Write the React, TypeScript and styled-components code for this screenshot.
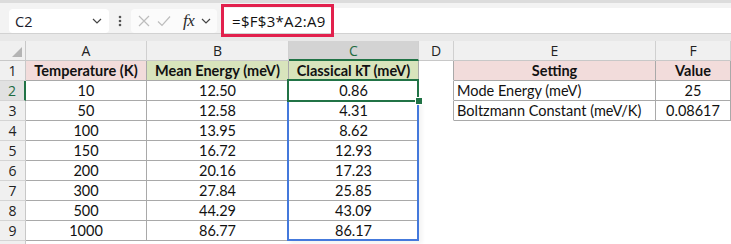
import React from 'react'
import styled, { createGlobalStyle } from 'styled-components'

const GlobalStyle = createGlobalStyle`
  html, body {
    margin: 0;
    padding: 0;
    background: #ffffff;
  }
  body {
    font-family: Lato, 'Liberation Sans', sans-serif;
  }
`

const Page = styled.div`
  width: 731px;
  height: 244px;
  overflow: hidden;
  display: flex;
  flex-direction: column;
  background: #ffffff;
`

const TopStrip = styled.div`
  flex-shrink: 0;
  height: 3px;
  background: #dcdcdc;
`

const BarRow = styled.div`
  flex-shrink: 0;
  height: 30px;
  display: flex;
  align-items: flex-end;
  background: #f3f3f3;
  border-bottom: 1px solid #d2d2d2;
`

const Band = styled.div`
  flex-shrink: 0;
  height: 7px;
  background: #e8e8e8;
`

const NameBox = styled.div`
  width: 100px;
  height: 24px;
  margin-left: 9px;
  box-sizing: border-box;
  background: #ffffff;
  border-radius: 4px;
  display: flex;
  align-items: center;
  justify-content: space-between;
  padding: 0 7px 0 6px;
  font-family: 'Open Sans', sans-serif;
  font-size: 14.5px;
  color: #1c1c2c;
`

const Dots = styled.div`
  width: 22px;
  height: 24px;
  display: flex;
  align-items: center;
  justify-content: center;
`

const FuncBox = styled.div`
  width: 86px;
  height: 24px;
  box-sizing: border-box;
  background: #fbfbfb;
  border-radius: 4px;
  display: flex;
  align-items: center;
  padding-left: 7px;
  gap: 7px;
`

const Fx = styled.span`
  font-family: 'Liberation Serif', serif;
  font-style: italic;
  font-size: 17px;
  color: #2a2a2a;
  margin-left: 5px;
  letter-spacing: -0.5px;
`

const FormulaBar = styled.div`
  position: relative;
  flex: 1;
  height: 25px;
  margin-left: 4px;
  background: #ffffff;
  display: flex;
  align-items: center;
  padding-left: 11px;
  font-family: 'Open Sans', sans-serif;
  font-size: 15px;
  color: #111111;
  letter-spacing: 0.3px;
`

const Highlight = styled.div`
  position: absolute;
  left: 0;
  top: -4px;
  width: 113px;
  height: 33px;
  box-sizing: border-box;
  border: 3px solid #e2214d;
  z-index: 2;
`

const SheetWrap = styled.div`
  position: relative;
  flex: 1;
  min-height: 0;
`

const Sheet = styled.div`
  display: grid;
  grid-template-columns: 26px 121px 142px 130px 35px 202px 75px;
  grid-auto-rows: 20px;
`

const ColHead = styled.div<{ $active?: boolean }>`
  box-sizing: border-box;
  display: flex;
  align-items: center;
  justify-content: center;
  background: ${(p) => (p.$active ? '#d3d3d3' : '#f0f0f0')};
  color: ${(p) => (p.$active ? '#1e6b41' : '#222222')};
  border-right: 1px solid #d0d0d0;
  border-bottom: ${(p) => (p.$active ? '2px solid #217346' : '1px solid #c8c8c8')};
  font-family: 'Open Sans', sans-serif;
  font-size: 14px;
`

const Corner = styled.div`
  box-sizing: border-box;
  background: #f0f0f0;
  border-right: 1px solid #c8c8c8;
  border-bottom: 1px solid #c8c8c8;
  display: flex;
  align-items: flex-end;
  justify-content: flex-end;
  padding: 0 3px 3px 0;
`

const RowHead = styled.div<{ $active?: boolean }>`
  box-sizing: border-box;
  display: flex;
  align-items: center;
  justify-content: center;
  background: ${(p) => (p.$active ? '#e1e1e1' : '#f0f0f0')};
  color: ${(p) => (p.$active ? '#1e6b41' : '#222222')};
  border-right: ${(p) => (p.$active ? '2px solid #217346' : '1px solid #c8c8c8')};
  border-bottom: 1px solid #d4d4d4;
  font-family: 'Open Sans', sans-serif;
  font-size: 14px;
`

const Cell = styled.div<{
  $fill?: string
  $bold?: boolean
  $left?: boolean
  $right?: boolean
  $bottom?: boolean
}>`
  box-sizing: border-box;
  display: flex;
  align-items: center;
  justify-content: ${(p) => (p.$left ? 'flex-start' : 'center')};
  padding-left: ${(p) => (p.$left ? '3px' : '0')};
  background: ${(p) => p.$fill || '#ffffff'};
  border-right: 1px solid ${(p) => (p.$right ? '#a9a9a9' : 'transparent')};
  border-bottom: 1px solid ${(p) => (p.$bottom ? '#a9a9a9' : 'transparent')};
  font-size: 14.5px;
  font-weight: ${(p) => (p.$bold ? 700 : 400)};
  color: #111111;
  white-space: nowrap;
`

const RangeBox = styled.div`
  position: absolute;
  left: 287px;
  top: 59px;
  width: 132px;
  height: 141px;
  box-sizing: border-box;
  border: 2px solid #4479dc;
  box-shadow: 3px 3px 4px rgba(0, 0, 0, 0.05);
  pointer-events: none;
`

const ActiveCell = styled.div`
  position: absolute;
  left: 287px;
  top: 38px;
  width: 132px;
  height: 23px;
  box-sizing: border-box;
  border: 2px solid #217346;
  pointer-events: none;
`

const FillHandle = styled.div`
  position: absolute;
  left: 415px;
  top: 56px;
  width: 6px;
  height: 6px;
  background: #217346;
  border: 1px solid #ffffff;
`

const PINK = '#f2dcdb'
const GREEN = '#d8e4bc'

const columns = ['A', 'B', 'C', 'D', 'E', 'F']

const temps = ['10', '50', '100', '150', '200', '300', '500', '1000']
const meanEnergy = ['12.50', '12.58', '13.95', '16.72', '20.16', '27.84', '44.29', '86.77']
const classical = ['0.86', '4.31', '8.62', '12.93', '17.23', '25.85', '43.09', '86.17']

const settings: Record<number, [string, string]> = {
  2: ['Mode Energy (meV)', '25'],
  3: ['Boltzmann Constant (meV/K)', '0.08617'],
}

const Chevron = () => (
  <svg width='10' height='6' viewBox='0 0 10 6'>
    <path d='M1 1l4 4 4-4' fill='none' stroke='#444' strokeWidth='1.2' />
  </svg>
)

const App: React.FC = () => {
  const rows = []
  for (let i = 0; i < 8; i++) {
    const r = i + 2
    const setting = settings[r]
    rows.push(
      <React.Fragment key={r}>
        <RowHead $active={r === 2}>{r}</RowHead>
        <Cell $right $bottom>{temps[i]}</Cell>
        <Cell $right $bottom>{meanEnergy[i]}</Cell>
        <Cell $right $bottom>{classical[i]}</Cell>
        <Cell $right={!!setting} />
        {setting ? (
          <>
            <Cell $left $right $bottom>{setting[0]}</Cell>
            <Cell $right $bottom>{setting[1]}</Cell>
          </>
        ) : (
          <>
            <Cell />
            <Cell />
          </>
        )}
      </React.Fragment>
    )
  }

  return (
    <Page>
      <GlobalStyle />
      <TopStrip />
      <BarRow>
        <NameBox>
          <span>C2</span>
          <Chevron />
        </NameBox>
        <Dots>
          <svg width='4' height='12' viewBox='0 0 4 12'>
            <circle cx='2' cy='2' r='1.3' fill='#555' />
            <circle cx='2' cy='6' r='1.3' fill='#555' />
            <circle cx='2' cy='10' r='1.3' fill='#555' />
          </svg>
        </Dots>
        <FuncBox>
          <svg width='12' height='12' viewBox='0 0 12 12'>
            <path d='M1 1l10 10M11 1L1 11' stroke='#bdbdbd' strokeWidth='1.2' />
          </svg>
          <svg width='14' height='12' viewBox='0 0 14 12'>
            <path d='M1 6.5l4 4L13 1.5' fill='none' stroke='#bdbdbd' strokeWidth='1.2' />
          </svg>
          <Fx>fx</Fx>
          <Chevron />
        </FuncBox>
        <FormulaBar>
          <Highlight />
          =$F$3*A2:A9
        </FormulaBar>
      </BarRow>
      <Band />
      <SheetWrap>
        <Sheet>
          <Corner>
            <svg width='10' height='10' viewBox='0 0 10 10'>
              <path d='M10 0L10 10L0 10Z' fill='#b4b4b4' />
            </svg>
          </Corner>
          {columns.map((c) => (
            <ColHead key={c} $active={c === 'C'}>{c}</ColHead>
          ))}

          <RowHead>1</RowHead>
          <Cell $fill={PINK} $bold $right $bottom>Temperature (K)</Cell>
          <Cell $fill={GREEN} $bold $right $bottom>Mean Energy (meV)</Cell>
          <Cell $fill={GREEN} $bold $right $bottom>Classical kT (meV)</Cell>
          <Cell $right />
          <Cell $fill={PINK} $bold $right $bottom>Setting</Cell>
          <Cell $fill={PINK} $bold $right $bottom>Value</Cell>

          {rows}

          <RowHead />
        </Sheet>
        <RangeBox />
        <ActiveCell />
        <FillHandle />
      </SheetWrap>
    </Page>
  )
}

export default App
